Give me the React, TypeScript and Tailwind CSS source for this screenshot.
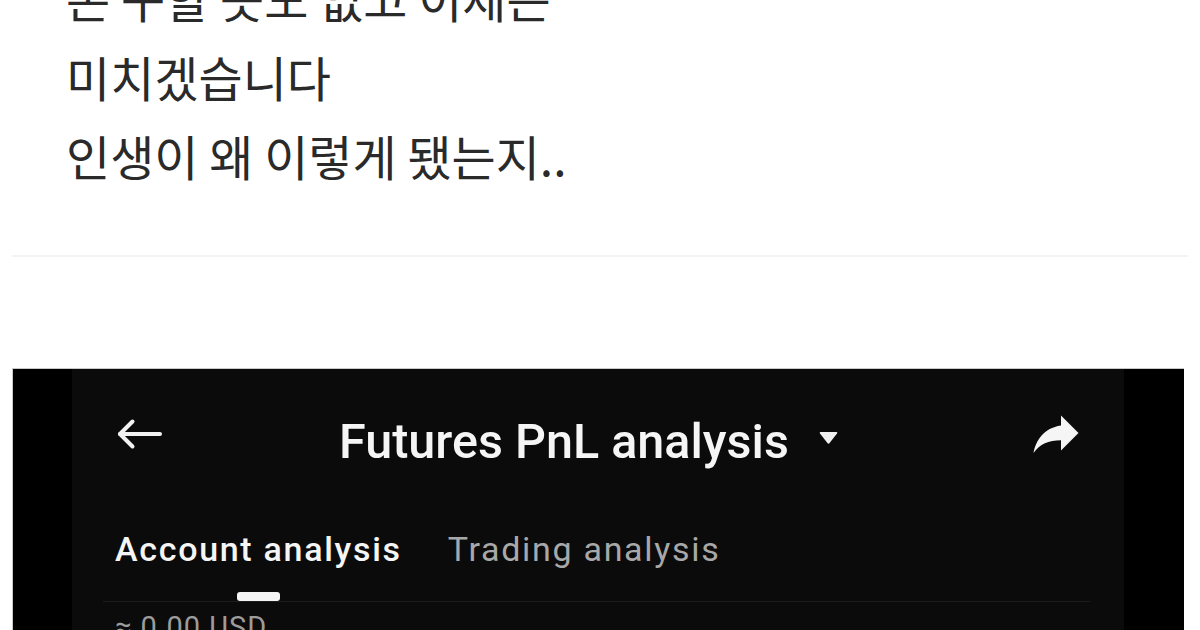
import React from "react";

const KR = { fontFamily: '"Noto Sans CJK KR", "Noto Sans", sans-serif' };
const RB = { fontFamily: 'Roboto, "Liberation Sans", sans-serif' };

function BackArrow() {
  return (
    <svg width="46" height="32" viewBox="0 0 46 32" fill="none">
      <path d="M3 16 H43" stroke="#f2f2f2" strokeWidth="4" strokeLinecap="round" />
      <path d="M15.5 3.5 L3 16 L15.5 28.5" stroke="#f2f2f2" strokeWidth="4" strokeLinecap="round" strokeLinejoin="round" />
    </svg>
  );
}

function ShareIcon() {
  return (
    <svg width="60" height="60" viewBox="0 0 24 24" fill="#f5f5f5">
      <path d="M14 9V5l7 7-7 7v-4.1c-5 0-8.5 1.6-11 5.1 1-5 4-10 11-11z" />
    </svg>
  );
}

function Caret() {
  return (
    <svg width="21" height="15" viewBox="0 0 21 15">
      <path d="M2.5 2 H18.5 Q20 2 19 3.5 L11.6 13 Q10.5 14.3 9.4 13 L2 3.5 Q1 2 2.5 2 Z" fill="#f0f0f0" />
    </svg>
  );
}

export default function App() {
  return (
    <div className="w-[1200px] h-[630px] overflow-hidden bg-white flex flex-col">
      <div className="mt-[-42px] pl-[66px] text-[48px] leading-[79px] text-[#2a2a2a]" style={KR}>
        <p>돈 구할 곳도 없고 이제는</p>
        <p>미치겠습니다</p>
        <p>인생이 왜 이렇게 됐는지..</p>
      </div>
      <div className="mt-[60px] mx-[12px] h-[2px] bg-[#f4f4f4] shrink-0" />
      <div className="mt-[111px] ml-[12px] w-[1172px] flex-1 bg-black border-t border-l border-[#c8c8c8] flex shrink-0">
        <div className="ml-[59px] w-[1052px] bg-[#0b0b0b] flex flex-col" style={RB}>
          <div className="h-[130px] flex items-start px-[45px] shrink-0">
            <div className="mt-[49px]">
              <BackArrow />
            </div>
            <div className="ml-[176px] mt-[45px] text-[48.5px] leading-[56px] font-medium text-[#f5f5f5] whitespace-nowrap">
              Futures PnL analysis
            </div>
            <div className="ml-[29px] mt-[61px]">
              <Caret />
            </div>
            <div className="flex-1" />
            <div className="mt-[34px] mr-[-7px]">
              <ShareIcon />
            </div>
          </div>
          <div className="mt-[30px] ml-[31px] mr-[34px] border-b border-[#1d1d1d] flex items-start pl-[12px] gap-[46px]">
            <div className="flex flex-col items-center">
              <span className="text-[34px] leading-[40px] tracking-[1.7px] font-medium text-[#f5f5f5] whitespace-nowrap">
                Account analysis
              </span>
              <span className="mt-[23px] w-[43px] h-[9px] rounded-[3px] bg-[#f5f5f5]" />
            </div>
            <span className="text-[34px] leading-[40px] tracking-[1.7px] text-[#a8a8a8] whitespace-nowrap">
              Trading analysis
            </span>
          </div>
          <div className="mt-[8px] pl-[43px] text-[29px] leading-[34px] tracking-[1px] text-[#9c9c9c] whitespace-nowrap">
            ≈ 0.00 USD
          </div>
        </div>
      </div>
    </div>
  );
}
